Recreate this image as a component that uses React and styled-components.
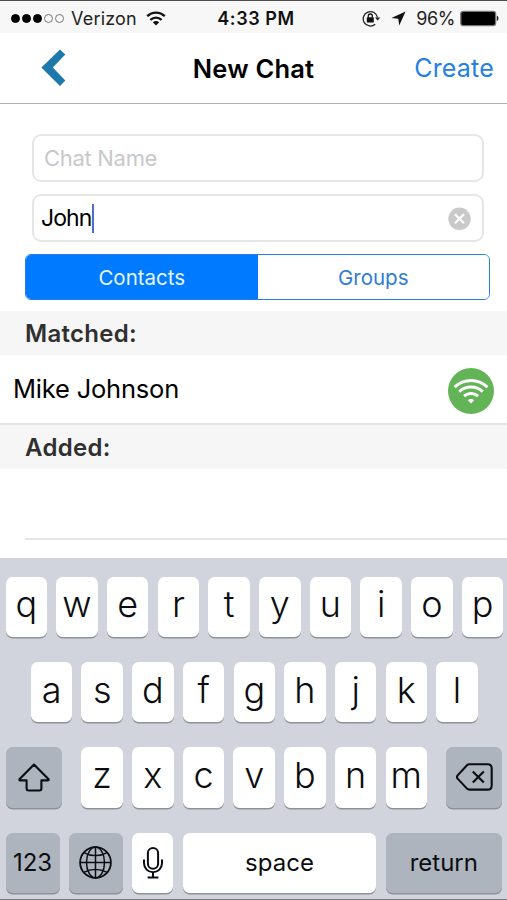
import React, { useState } from "react";
import styled, { createGlobalStyle } from "styled-components";

const GlobalStyle = createGlobalStyle`
  * {
    box-sizing: border-box;
  }

  body {
    margin: 0;
    background: #fff;
    font-family: Inter, "Liberation Sans", sans-serif;
    color: #000;
  }

  button {
    margin: 0;
    padding: 0;
    border: 0;
    background: none;
    font: inherit;
    color: inherit;
  }
`;

const Phone = styled.div`
  display: flex;
  flex-direction: column;
  width: 507px;
  height: 900px;
  overflow: hidden;
  border-top: 1px solid #505050;
  border-bottom: 1px solid #77797d;
  background: #fff;
`;

const StatusBar = styled.div`
  display: grid;
  grid-template-columns: 1fr auto 1fr;
  align-items: center;
  height: 32px;
  padding: 2px 8px 0 11px;
  background: #f7f7f7;
  font-size: 18px;
  color: #222;
`;

const StatusSide = styled.div`
  display: flex;
  align-items: center;
  justify-content: ${(p) => (p.$right ? "flex-end" : "flex-start")};
`;

const Signal = styled.div`
  display: flex;
  gap: 2px;
  margin-right: 7px;
`;

const Dot = styled.span`
  width: 9px;
  height: 9px;
  border-radius: 50%;
  border: 1px solid ${(p) => (p.$on ? "#000" : "#777")};
  background: ${(p) => (p.$on ? "#000" : "transparent")};
`;

const Carrier = styled.span`
  margin-right: 9px;
  letter-spacing: 0.2px;
`;

const Clock = styled.span`
  padding-left: 2px;
  font-weight: 600;
  letter-spacing: 0.6px;
  color: #111;
`;

const Percent = styled.span`
  margin: 0 5px 0 10px;
  letter-spacing: -0.4px;
`;

const NavBar = styled.header`
  display: grid;
  grid-template-columns: 1fr auto 1fr;
  align-items: center;
  height: 71px;
  padding: 0 13px;
  border-bottom: 1px solid #b0b0b0;
`;

const BackButton = styled.button`
  display: flex;
  justify-self: start;
  margin-left: 28px;
`;

const Title = styled.h1`
  margin: 0;
  font-size: 25.5px;
  font-weight: 600;
  letter-spacing: 0.2px;
`;

const CreateButton = styled.button`
  justify-self: end;
  font-size: 25px;
  letter-spacing: 0.2px;
  color: #2380e5;
`;

const Form = styled.div`
  display: flex;
  flex-direction: column;
  gap: 12px;
  padding: 30px 17px 11px 25px;
`;

const Field = styled.div`
  display: flex;
  align-items: center;
  height: 48px;
  margin: 0 6px 0 7px;
  padding: 0 11px 0 ${(p) => (p.$filled ? "7px" : "10px")};
  border: 2px solid #e6e6e6;
  border-radius: 9px;
  font-size: ${(p) => (p.$filled ? "23px" : "22px")};
  letter-spacing: ${(p) => (p.$filled ? "-0.9px" : "-0.3px")};
  color: ${(p) => (p.$filled ? "#000" : "#c8c8cb")};
`;

const Caret = styled.span`
  width: 2px;
  height: 29px;
  background: #4f6bd8;
`;

const ClearButton = styled.button`
  display: flex;
  margin-left: auto;
`;

const Segmented = styled.div`
  display: flex;
  height: 46px;
  border: 1.5px solid #2a7fe4;
  border-radius: 6px;
  overflow: hidden;
`;

const Segment = styled.button`
  flex: 1;
  font-size: 20.5px;
  background: ${(p) => (p.$active ? "#007aff" : "#fff")};
  color: ${(p) => (p.$active ? "#e4f6ff" : "#2e7cd6")};
`;

const SectionHeader = styled.h2`
  display: flex;
  align-items: center;
  height: 44px;
  margin: 0;
  padding: 0 0 0 25px;
  background: #f6f6f6;
  font-size: 24px;
  font-weight: 600;
  letter-spacing: 0.3px;
  color: #303030;
`;

const ContactRow = styled.div`
  display: flex;
  align-items: center;
  justify-content: space-between;
  height: 70px;
  padding: 0 13px;
  border-bottom: 2px solid #e6e6e6;
  font-size: 25.5px;
  letter-spacing: -0.2px;
`;

const ContactName = styled.span`
  padding-bottom: 2px;
`;

const Status = styled.span`
  display: flex;
  padding-top: 3px;
`;

const EmptyRow = styled.div`
  height: 71px;
  margin-left: 25px;
  border-bottom: 2px solid #e6e6e6;
`;

const Keyboard = styled.div`
  display: flex;
  flex-direction: column;
  gap: 25px;
  height: 341px;
  margin-top: auto;
  padding: 18.5px 5px 0 5.6px;
  background: #d1d4dc;
`;

const KeyRow = styled.div`
  display: flex;
  gap: 9.2px;
  padding: 0 ${(p) => p.$inset || 0}px;
`;

const Key = styled.button`
  display: flex;
  flex: none;
  align-items: center;
  justify-content: center;
  width: ${(p) => p.$width || 41.5}px;
  height: 60.4px;
  padding-bottom: ${(p) => (p.$label ? 0 : 5)}px;
  margin-left: ${(p) => p.$before || 0}px;
  border-radius: 6.5px;
  box-shadow: 0 1.5px 0 #8f9299;
  background: ${(p) => (p.$dark ? "#adb4be" : "#fff")};
  font-size: ${(p) => (p.$label ? 24 : 36)}px;
  font-weight: ${(p) => (p.$label ? 400 : 360)};
  color: #0b0d10;
`;

const WifiIcon = () => (
  <svg width="20" height="15" viewBox="0 0 20 15" fill="none" stroke="#111" strokeWidth="2.3">
    <path d="M1.2 5.3C6.2 .4 13.8 .4 18.8 5.3" />
    <path d="M4.4 8.8C7.6 5.8 12.4 5.8 15.6 8.8" />
    <path d="M10 14.4L6.8 11.2C8.6 9.6 11.4 9.6 13.2 11.2Z" fill="#111" stroke="none" />
  </svg>
);

const LockIcon = () => (
  <svg width="19" height="17" viewBox="0 0 19 17" fill="none">
    <path d="M13.2 14.2A7.2 7.2 0 1 1 15.5 7.5" stroke="#222" strokeWidth="1.3" />
    <path d="M12.9 7.4H18.3L15.6 10.6Z" fill="#222" />
    <rect x="4.8" y="7.3" width="7" height="5.2" rx=".6" fill="#111" />
    <path d="M6.3 7.8V6A2 2 0 0 1 10.3 6V7.8" stroke="#111" strokeWidth="1.3" />
  </svg>
);

const Arrow = styled.svg`
  margin-left: 10px;
`;

const LocationIcon = () => (
  <Arrow width="15" height="15" viewBox="0 0 14 14">
    <path d="M13.6 .4L7.7 13.6L6.8 7.3L.4 6.5Z" fill="#111" />
  </Arrow>
);

const BatteryIcon = () => (
  <svg width="39" height="17" viewBox="0 0 39 17">
    <rect x=".8" y="1.3" width="34.8" height="14.4" rx="2.4" fill="#000" stroke="#777" strokeWidth="1.3" />
    <path d="M36.8 5.8C39 6.2 39 10.6 36.8 11Z" fill="#222" />
  </svg>
);

const BackIcon = () => (
  <svg width="25" height="38" viewBox="0 0 25 38">
    <path d="M19 .4L24.3 5.6L11.8 18.6L24.3 31.5L19 37.1L.4 18.6Z" fill="#1d78ab" />
  </svg>
);

const ClearIcon = () => (
  <svg width="23" height="23" viewBox="0 0 23 23">
    <circle cx="11.5" cy="11.8" r="11.2" fill="#c9c9c9" />
    <path d="M7 7.3L16 16.3M16 7.3L7 16.3" stroke="#fff" strokeWidth="2.2" />
  </svg>
);

const OnlineIcon = () => (
  <svg width="46" height="46" viewBox="0 0 46 46" fill="none" stroke="#fff" strokeWidth="3">
    <circle cx="23" cy="23" r="23" fill="#63b457" stroke="none" />
    <path d="M6.6 19.1C16 10.2 30 10.2 39.4 19.1" />
    <path d="M11.3 23.6C18 17.6 28 17.6 34.7 23.6" />
    <path d="M16 28.2C20 24.7 26 24.7 30 28.2" />
    <path d="M23 35.4L19.8 32.2C21.6 30.6 24.4 30.6 26.2 32.2Z" fill="#fff" stroke="none" />
  </svg>
);

const ShiftIcon = () => (
  <svg width="32" height="29" viewBox="0 0 32 29" fill="none" stroke="#0b0d10" strokeWidth="2.1" strokeLinejoin="round">
    <path d="M16 1.5L30.6 16.3Q31 17.4 29.7 17.4H23.4V25.5Q23.4 27.5 21.4 27.5H10.6Q8.6 27.5 8.6 25.5V17.4H2.3Q1 17.4 1.4 16.3Z" />
  </svg>
);

const DeleteIcon = () => (
  <svg width="37" height="28" viewBox="0 0 37 28" fill="none" stroke="#0b0d10" strokeWidth="2.1" strokeLinejoin="round">
    <path d="M13.4 1.3H31.5Q35.7 1.3 35.7 5.5V22.4Q35.7 26.6 31.5 26.6H13.4Q12 26.6 11 25.6L1.6 15.6Q.4 14 1.6 12.4L11 2.3Q12 1.3 13.4 1.3Z" />
    <path d="M16.8 8.6L27.8 19.6M27.8 8.6L16.8 19.6" />
  </svg>
);

const GlobeIcon = () => (
  <svg width="33" height="33" viewBox="0 0 33 33" fill="none" stroke="#0b0d10" strokeWidth="1.5">
    <circle cx="16.5" cy="16.5" r="15.4" strokeWidth="1.8" />
    <ellipse cx="16.5" cy="16.5" rx="9" ry="15.4" />
    <path d="M16.5 1V32M1 16.5H32M4.8 6.6C12 10.6 21 10.6 28.2 6.6M4.8 26.4C12 22.4 21 22.4 28.2 26.4" />
  </svg>
);

const MicIcon = () => (
  <svg width="20" height="32" viewBox="0 0 20 32" fill="none" stroke="#0b0d10" strokeWidth="2">
    <rect x="4.9" y="1" width="10.2" height="20.8" rx="5.1" />
    <path d="M1 12.5V16.3A9 9 0 0 0 19 16.3V12.5M10 25.3V30.5M4.6 30.6H15.4" />
  </svg>
);

const signal = [true, true, true, false, false];
const segments = ["Contacts", "Groups"];

const ChatPage = () => {
  const [active, setActive] = useState("Contacts");
  const [member, setMember] = useState("John");

  return (
    <Phone>
      <StatusBar>
        <StatusSide>
          <Signal>
            {signal.map((on, i) => (
              <Dot key={i} $on={on} />
            ))}
          </Signal>
          <Carrier>Verizon</Carrier>
          <WifiIcon />
        </StatusSide>
        <Clock>4:33 PM</Clock>
        <StatusSide $right>
          <LockIcon />
          <LocationIcon />
          <Percent>96%</Percent>
          <BatteryIcon />
        </StatusSide>
      </StatusBar>

      <NavBar>
        <BackButton aria-label="Back">
          <BackIcon />
        </BackButton>
        <Title>New Chat</Title>
        <CreateButton>Create</CreateButton>
      </NavBar>

      <Form>
        <Field>Chat Name</Field>
        <Field $filled>
          {member}
          <Caret />
          <ClearButton aria-label="Clear" onClick={() => setMember("")}>
            <ClearIcon />
          </ClearButton>
        </Field>
        <Segmented>
          {segments.map((name) => (
            <Segment key={name} $active={name === active} onClick={() => setActive(name)}>
              {name}
            </Segment>
          ))}
        </Segmented>
      </Form>

      <SectionHeader>Matched:</SectionHeader>
      <ContactRow>
        <ContactName>Mike Johnson</ContactName>
        <Status>
          <OnlineIcon />
        </Status>
      </ContactRow>
      <SectionHeader>Added:</SectionHeader>
      <EmptyRow />

      <Keyboard>
        <KeyRow>
          {[..."qwertyuiop"].map((k) => (
            <Key key={k}>{k}</Key>
          ))}
        </KeyRow>
        <KeyRow $inset={25.2}>
          {[..."asdfghjkl"].map((k) => (
            <Key key={k}>{k}</Key>
          ))}
        </KeyRow>
        <KeyRow>
          <Key $dark $label $width={56.6} aria-label="Shift">
            <ShiftIcon />
          </Key>
          {[..."zxcvbnm"].map((k, i) => (
            <Key key={k} $before={i === 0 ? 10 : 0}>{k}</Key>
          ))}
          <Key $dark $label $width={56.6} $before={9.6} aria-label="Delete">
            <DeleteIcon />
          </Key>
        </KeyRow>
        <KeyRow>
          <Key $dark $label $width={54}>123</Key>
          <Key $dark $label $width={54} aria-label="Next keyboard">
            <GlobeIcon />
          </Key>
          <Key $label aria-label="Dictate">
            <MicIcon />
          </Key>
          <Key $label $width={193.7}>space</Key>
          <Key $dark $label $width={116.6}>return</Key>
        </KeyRow>
      </Keyboard>
    </Phone>
  );
};

const App = () => (
  <>
    <GlobalStyle />
    <ChatPage />
  </>
);

export default App;
